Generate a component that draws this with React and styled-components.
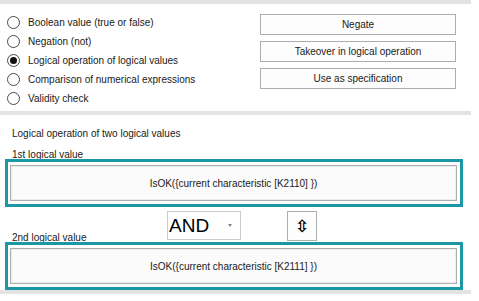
import React from "react";
import styled, { createGlobalStyle } from "styled-components";

const GlobalStyle = createGlobalStyle`
  html, body { margin: 0; padding: 0; background: #fff; }
  body { font-family: "Liberation Sans", Arial, sans-serif; }
`;

const options = [
  "Boolean value (true or false)",
  "Negation (not)",
  "Logical operation of logical values",
  "Comparison of numerical expressions",
  "Validity check",
];

const actions = ["Negate", "Takeover in logical operation", "Use as specification"];

const App = () =>
  <Panel>
    <GlobalStyle />
    <Rule />
    <Options>
      <RadioList>
        {options.map((o, i) =>
          <RadioRow key={o}>
            <Radio checked={i === 2} />
            {o}
          </RadioRow>
        )}
      </RadioList>
      <ButtonColumn>
        {actions.map(a => <FormButton key={a}>{a}</FormButton>)}
      </ButtonColumn>
    </Options>
    <Rule />
    <Caption>Logical operation of two logical values</Caption>
    <FieldLabel>1st logical value</FieldLabel>
    <ValueBox>
      <ValueInner>IsOK({"{"}current characteristic [K2110] {"}"})</ValueInner>
    </ValueBox>
    <OperatorRow>
      <RowLabel>2nd logical value</RowLabel>
      <Combo>
        AND
        <ComboArrow />
      </Combo>
      <SwapButton>⇳</SwapButton>
    </OperatorRow>
    <ValueBox>
      <ValueInner>IsOK({"{"}current characteristic [K2111] {"}"})</ValueInner>
    </ValueBox>
    <Rule />
  </Panel>
;

export default App;

const Panel = styled.div`
  width: 479px;
  height: 301px;
  overflow: hidden;
  background: #fff;
  font-size: 10px;
  color: #1a1a1a;
`;

const Rule = styled.div`
  width: 471px;
  height: 4px;
  background: #e3e3e3;
`;

const Options = styled.div`
  display: flex;
  height: 107px;
`;

const RadioList = styled.div`
  display: flex;
  flex-direction: column;
  padding: 9px 0 0 7px;
`;

const RadioRow = styled.div`
  display: flex;
  align-items: center;
  gap: 8px;
  height: 19px;
  white-space: nowrap;
`;

const Radio = styled.span`
  box-sizing: border-box;
  width: 13px;
  height: 13px;
  border: 1px solid #4a4a4a;
  border-radius: 50%;
  background: #fff;
  display: flex;
  align-items: center;
  justify-content: center;
  &::after {
    content: "";
    width: 7px;
    height: 7px;
    border-radius: 50%;
    background: #111;
    display: ${p => (p.checked ? "block" : "none")};
  }
`;

const ButtonColumn = styled.div`
  margin-left: auto;
  margin-right: 23px;
  padding-top: 10px;
  width: 196px;
  display: flex;
  flex-direction: column;
  gap: 6px;
`;

const FormButton = styled.button`
  box-sizing: border-box;
  height: 21px;
  width: 100%;
  padding: 0;
  border: 1px solid #adadad;
  border-radius: 0;
  background: #fdfdfd;
  font-family: "Liberation Sans", Arial, sans-serif;
  font-size: 10px;
  color: #1a1a1a;
`;

const Caption = styled.div`
  margin: 11px 0 0 12px;
  line-height: 15px;
  height: 15px;
`;

const FieldLabel = styled.div`
  margin: 6px 0 0 12px;
  height: 12px;
  line-height: 15px;
  overflow: hidden;
`;

const ValueBox = styled.div`
  box-sizing: border-box;
  margin-left: 5px;
  width: 458px;
  height: 48px;
  border: 3px solid #1b97a6;
  padding: 3px 3px 3px 2px;
  display: flex;
`;

const ValueInner = styled.div`
  flex: 1;
  border: 1px solid #adadad;
  box-shadow: inset 0 0 0 1px #ececec;
  background: #fbfbfb;
  display: flex;
  align-items: center;
  justify-content: center;
`;

const OperatorRow = styled.div`
  display: flex;
  align-items: flex-start;
  height: 35px;
  padding-left: 12px;
`;

const RowLabel = styled.div`
  align-self: flex-end;
  width: 155px;
  height: 12px;
  line-height: 15px;
  overflow: hidden;
  white-space: nowrap;
`;

const Combo = styled.div`
  box-sizing: border-box;
  margin-top: 4px;
  width: 74px;
  height: 29px;
  border: 1px solid #cccccc;
  background: #fff;
  display: flex;
  align-items: center;
  padding-left: 1px;
  font-size: 19px;
  color: #000;
  position: relative;
`;

const ComboArrow = styled.span`
  position: absolute;
  right: 8px;
  top: 12px;
  border-left: 2.5px solid transparent;
  border-right: 2.5px solid transparent;
  border-top: 3px solid #808080;
`;

const SwapButton = styled.div`
  box-sizing: border-box;
  margin: 4px 0 0 46px;
  width: 30px;
  height: 30px;
  border: 1px solid #adadad;
  background: #fdfdfd;
  display: flex;
  align-items: center;
  justify-content: center;
  font-family: "DejaVu Sans", sans-serif;
  font-size: 17px;
  font-weight: bold;
  color: #000;
`;
